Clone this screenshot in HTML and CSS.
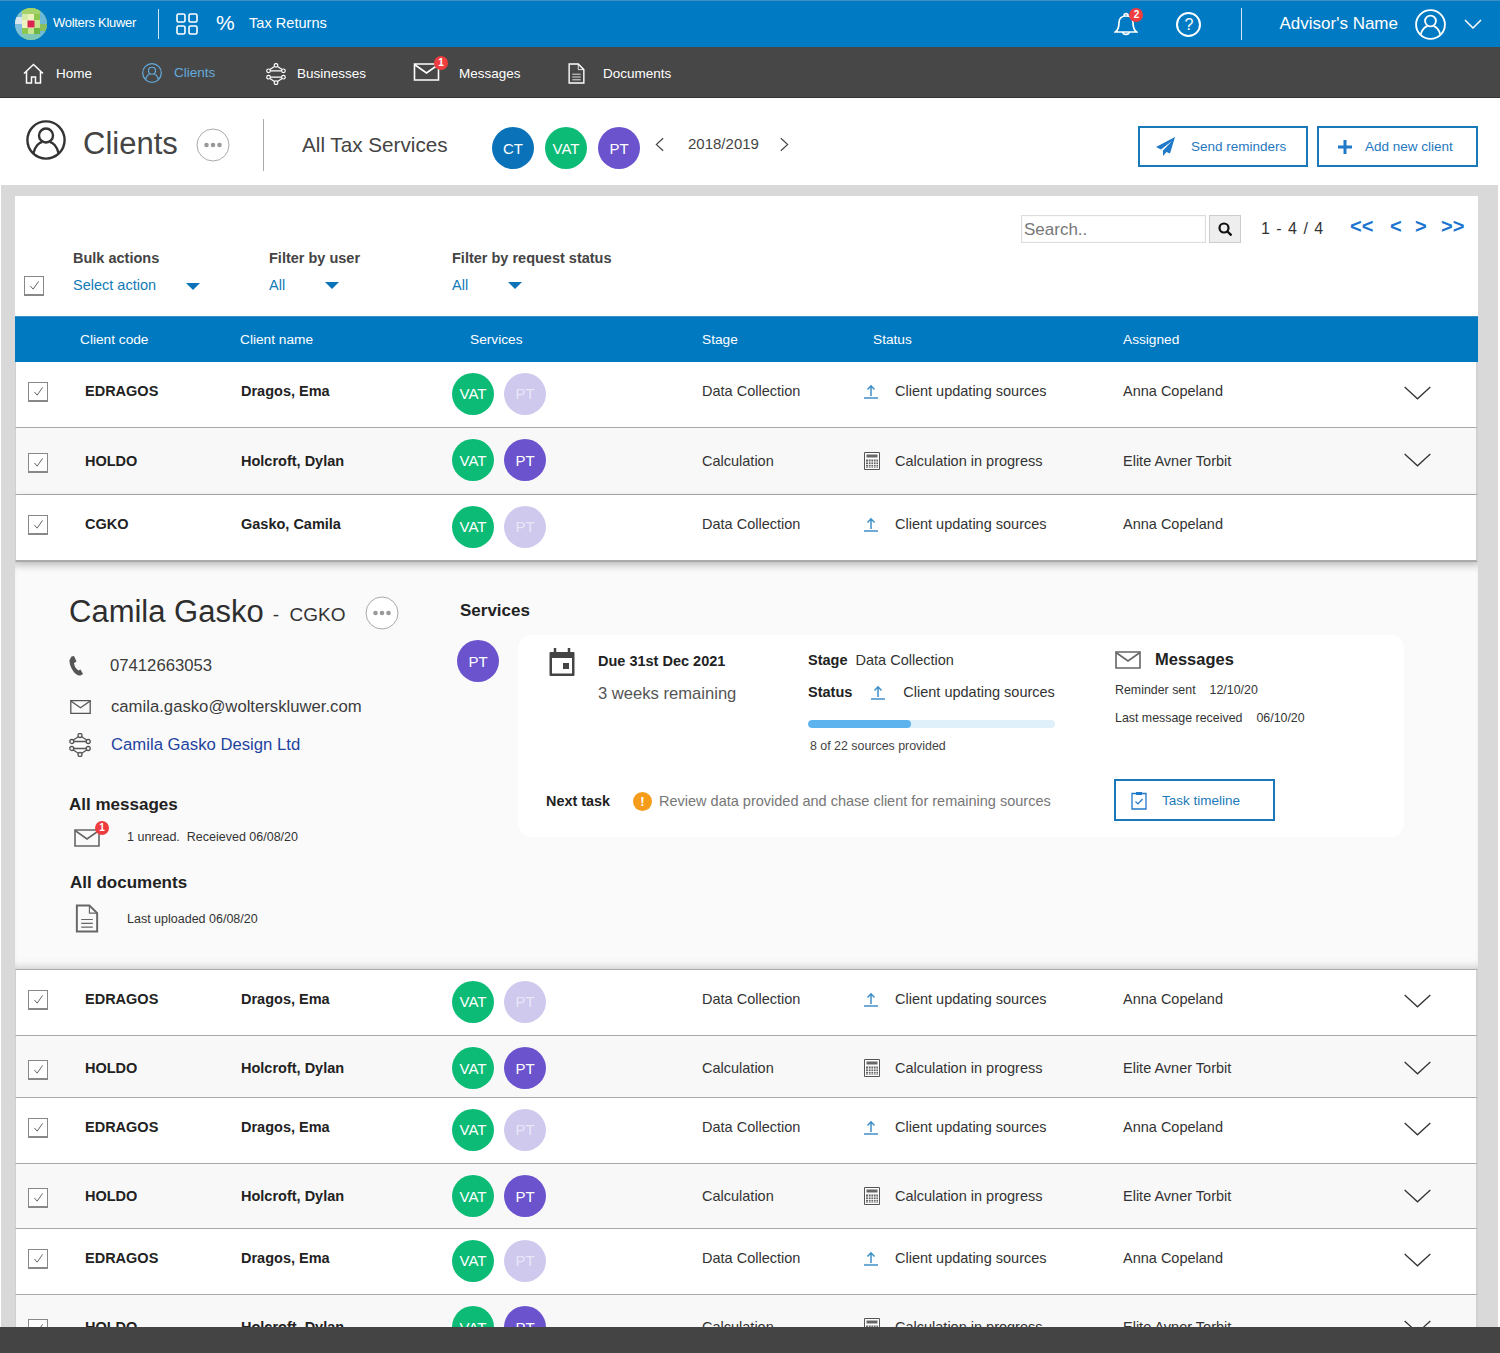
FILE: index.html
```html
<!DOCTYPE html>
<html lang="en">
<head>
<meta charset="utf-8">
<title>Clients</title>
<link rel="stylesheet" href="styles.css">
</head>
<body>
<svg class="sprite" xmlns="http://www.w3.org/2000/svg">
  <symbol id="i-user" viewBox="0 0 40 40"><circle cx="20" cy="20" r="18.600" fill="none" stroke="currentColor" stroke-width="2.400"/><circle cx="20" cy="15.500" r="7" fill="none" stroke="currentColor" stroke-width="2.400"/><path d="M7.500 33c1.500-7 6-10.500 8.500-11M32.500 33c-1.500-7-6-10.500-8.500-11" fill="none" stroke="currentColor" stroke-width="2.400"/></symbol>
  <symbol id="i-up" viewBox="0 0 16 16"><path d="M8 13V3M4.500 6.500 8 2.800l3.500 3.700" fill="none" stroke="#3f8fc7" stroke-width="1.500"/><path d="M1 15h14" stroke="#3f8fc7" stroke-width="1.500"/></symbol>
  <symbol id="i-calc" viewBox="0 0 16 18"><path d="M.5.500h15v17H.5z" fill="#fff" stroke="#555"/><path d="M2.500 2.500h11v3h-11z" fill="#666"/><path d="M2 7.500h12v8.500H2z" fill="#666"/><path d="M4.500 7.500V16M7 7.500V16M9.500 7.500V16M12 7.500V16M2 10h12M2 12.500h12M2 15h12" stroke="#fff" stroke-width=".8"/></symbol>
  <symbol id="i-chev" viewBox="0 0 28 14"><path d="M.7.700 14 13 27.300.700" fill="none" stroke="#333" stroke-width="1.300"/></symbol>
  <symbol id="i-check" viewBox="0 0 12 12"><path d="M1.500 6.500 4.500 10 10.500 1.500" fill="none" stroke="#555" stroke-width="1"/></symbol>
  <symbol id="i-mail" viewBox="0 0 26 18"><path d="M1 1h24v16H1z" fill="none" stroke="currentColor" stroke-width="1.600"/><path d="M1 1.500 13 10 25 1.500" fill="none" stroke="currentColor" stroke-width="1.600"/></symbol>
  <symbol id="i-doc" viewBox="0 0 24 30"><path d="M1.500 1.500h13l8 8v19h-21z" fill="none" stroke="currentColor" stroke-width="2"/><path d="M14.500 1.500v8h8M6 16h12M6 20h12M6 24h12" fill="none" stroke="currentColor" stroke-width="1.200"/></symbol>
  <symbol id="i-biz" viewBox="0 0 22 24"><g fill="none" stroke="currentColor" stroke-width="1.300"><circle cx="11" cy="2.500" r="2"/><circle cx="11" cy="21.500" r="2"/><circle cx="2.800" cy="8.500" r="2"/><circle cx="19.200" cy="8.500" r="2"/><circle cx="2.800" cy="15.500" r="2"/><circle cx="19.200" cy="15.500" r="2"/><path d="M9.300 3.800 4.300 7M12.700 3.800l5 3.200M4.800 8.500h12.400M4.800 15.500h12.400M9.300 20.200l-5-3.200M12.700 20.200l5-3.200"/></g></symbol>
  <symbol id="i-more" viewBox="0 0 34 34"><circle cx="17" cy="17" r="16" fill="#fff" stroke="#aaa"/><circle cx="10.500" cy="17" r="2.300" fill="#999"/><circle cx="17" cy="17" r="2.300" fill="#999"/><circle cx="23.500" cy="17" r="2.300" fill="#999"/></symbol>
</svg>

<div class="topbar">
  <div class="brand">
    <svg class="logo" viewBox="0 0 32 32"><defs><clipPath id="logo-clip"><circle cx="16" cy="16" r="16"/></clipPath></defs><g clip-path="url(#logo-clip)"><rect width="32" height="32" fill="#8cc850"/><rect x="0" y="0" width="7" height="32" fill="#7fbfdc"/><rect x="25" y="0" width="7" height="32" fill="#6fb9d8"/><rect x="7" y="0" width="18" height="6" fill="#a5d36a"/><rect x="7" y="26" width="18" height="6" fill="#7fc8b8"/><rect x="7" y="6" width="6" height="6" fill="#d5e9a8"/><rect x="13" y="6" width="6" height="6" fill="#eef2c0"/><rect x="19" y="6" width="6" height="6" fill="#8cc850"/><rect x="7" y="12" width="6" height="8" fill="#eef2c0"/><rect x="13" y="12" width="6" height="8" fill="#fff7d8"/><rect x="19" y="12" width="6" height="8" fill="#c9e490"/><rect x="7" y="20" width="6" height="6" fill="#8cc850"/><rect x="13" y="20" width="6" height="6" fill="#c9e490"/><rect x="19" y="20" width="6" height="6" fill="#6db544"/><rect x="0" y="9" width="7" height="7" fill="#d8e6ee"/><rect x="25" y="16" width="7" height="7" fill="#8bbf5e"/><rect x="12.500" y="12.500" width="7" height="7" fill="#d9264f"/></g></svg>
    <span class="brand-name">Wolters Kluwer</span>
  </div>
  <span class="bar-divider"></span>
  <svg class="grid-icon" viewBox="0 0 22 22"><g fill="none" stroke="#fff" stroke-width="1.600"><rect x="1" y="1" width="8" height="8" rx="1.500"/><rect x="13" y="1" width="8" height="8" rx="1.500"/><rect x="1" y="13" width="8" height="8" rx="1.500"/><rect x="13" y="13" width="8" height="8" rx="1.500"/></g></svg>
  <span class="percent">%</span>
  <span class="product">Tax Returns</span>
  <div class="topbar-right">
    <span class="bell">
      <svg viewBox="0 0 24 24" width="24" height="24"><path d="M1.500 20c2.500-2 3.500-5 3.500-9.500 0-4 3-6.500 7-6.500s7 2.500 7 6.500c0 4.500 1 7.500 3.500 9.500zM10 3.500c0-2.500 4-2.500 4 0M9 20.500c0 2.500 6 2.500 6 0" fill="none" stroke="#fff" stroke-width="1.700"/></svg>
      <b class="badge badge-bell">2</b>
    </span>
    <span class="help">?</span>
    <span class="bar-divider bar-divider-right"></span>
    <span class="advisor">Advisor's Name</span>
    <svg class="advisor-user"><use href="#i-user"/></svg>
    <svg class="advisor-chev" viewBox="0 0 18 10"><path d="M1 1l8 8 8-8" fill="none" stroke="#fff" stroke-width="1.500"/></svg>
  </div>
</div>

<nav class="nav">
  <a class="nav-item"><svg class="nav-icon" width="21" height="21" viewBox="0 0 21 21"><path d="M1 10.500 10.500 1.500 20 10.500M3.500 8.500V20h5v-6h4v6h5V8.500" fill="none" stroke="#fff" stroke-width="1.500"/></svg>Home</a>
  <a class="nav-item nav-active"><svg class="nav-icon nav-user" width="20" height="20"><use href="#i-user"/></svg>Clients</a>
  <a class="nav-item nav-narrow"><svg class="nav-icon" width="20" height="22"><use href="#i-biz"/></svg>Businesses</a>
  <a class="nav-item"><span class="nav-mail"><svg width="27" height="18"><use href="#i-mail"/></svg><b class="badge badge-nav">1</b></span>Messages</a>
  <a class="nav-item"><svg class="nav-icon nav-doc" width="17" height="21"><use href="#i-doc"/></svg>Documents</a>
</nav>

<header class="page-head">
  <svg class="head-user"><use href="#i-user"/></svg>
  <h1 class="head-title">Clients</h1>
  <svg class="more more-head"><use href="#i-more"/></svg>
  <span class="head-divider"></span>
  <span class="head-sub">All Tax Services</span>
  <div class="avatars head-avatars">
    <span class="avatar av-ct">CT</span>
    <span class="avatar av-vat">VAT</span>
    <span class="avatar av-pt">PT</span>
  </div>
  <svg class="year-arrow year-prev" viewBox="0 0 10 16"><path d="M9 1 1.500 8 9 15" fill="none" stroke="#444" stroke-width="1.300"/></svg>
  <span class="year">2018/2019</span>
  <svg class="year-arrow year-next" viewBox="0 0 10 16"><path d="M1 1l7.500 7L1 15" fill="none" stroke="#444" stroke-width="1.300"/></svg>
  <div class="head-actions">
    <a class="btn btn-send"><svg width="19" height="19" viewBox="0 0 19 19"><path d="M19 0 0 10l5 2.500L16 4 7 13.500V19l3.500-4 3.500 1.500z" fill="#1f78c8"/></svg>Send reminders</a>
    <a class="btn btn-add"><svg width="14" height="14" viewBox="0 0 14 14"><path d="M7 0v14M0 7h14" stroke="#1f78c8" stroke-width="3"/></svg>Add new client</a>
  </div>
</header>

<main class="content">
  <section class="panel">
    <div class="pager">
      <span class="search-field">Search..</span>
      <span class="search-btn"><svg width="14" height="14" viewBox="0 0 14 14"><circle cx="6" cy="6" r="4.500" fill="none" stroke="#111" stroke-width="2.200"/><path d="m9.500 9.500 4 4" stroke="#111" stroke-width="2.400"/></svg></span>
      <span class="page-count">1 - 4 / 4</span>
      <span class="page-links"><a>&lt;&lt;</a><a>&lt;</a><a>&gt;</a><a>&gt;&gt;</a></span>
    </div>
    <div class="filters">
      <span class="check check-all"><svg><use href="#i-check"/></svg></span>
      <div class="filter filter-bulk"><span class="filter-label">Bulk actions</span><span class="filter-value">Select action<i class="caret"></i></span></div>
      <div class="filter filter-user"><span class="filter-label">Filter by user</span><span class="filter-value">All<i class="caret"></i></span></div>
      <div class="filter filter-req"><span class="filter-label">Filter by request status</span><span class="filter-value">All<i class="caret"></i></span></div>
    </div>
    <div class="table-head">
      <span>Client code</span><span>Client name</span><span>Services</span><span>Stage</span><span>Status</span><span>Assigned</span>
    </div>

    <div class="row row-plain">
      <span class="check"><svg><use href="#i-check"/></svg></span>
      <span class="code">EDRAGOS</span><span class="name">Dragos, Ema</span>
      <div class="avatars"><span class="avatar av-vat">VAT</span><span class="avatar av-off">PT</span></div>
      <span class="cell">Data Collection</span>
      <span class="cell status"><svg class="st-icon"><use href="#i-up"/></svg>Client updating sources</span>
      <span class="cell">Anna Copeland</span>
      <svg class="chev"><use href="#i-chev"/></svg>
    </div>
    <div class="row row-alt row-tall">
      <span class="check"><svg><use href="#i-check"/></svg></span>
      <span class="code">HOLDO</span><span class="name">Holcroft, Dylan</span>
      <div class="avatars"><span class="avatar av-vat">VAT</span><span class="avatar av-pt">PT</span></div>
      <span class="cell">Calculation</span>
      <span class="cell status"><svg class="st-icon st-calc"><use href="#i-calc"/></svg>Calculation in progress</span>
      <span class="cell">Elite Avner Torbit</span>
      <svg class="chev"><use href="#i-chev"/></svg>
    </div>
    <div class="row row-plain row-open">
      <span class="check"><svg><use href="#i-check"/></svg></span>
      <span class="code">CGKO</span><span class="name">Gasko, Camila</span>
      <div class="avatars"><span class="avatar av-vat">VAT</span><span class="avatar av-off">PT</span></div>
      <span class="cell">Data Collection</span>
      <span class="cell status"><svg class="st-icon"><use href="#i-up"/></svg>Client updating sources</span>
      <span class="cell">Anna Copeland</span>
    </div>

    <div class="detail">
      <div class="detail-left">
        <div class="person">
          <h2 class="person-name">Camila Gasko</h2>
          <span class="person-code">-&nbsp; CGKO</span>
          <svg class="more more-person"><use href="#i-more"/></svg>
        </div>
        <div class="contact contact-phone">
          <svg class="contact-icon phone" width="14" height="20" viewBox="0 0 14 20"><path d="M2.500.500 5 0l2.500 5.500L5 7c0 2.500 2 6 4.500 7.500l2-1 2.500 4.500-2.500 1.500C6 20.500 0 10 .5 4z" fill="#555"/></svg>
          <span>07412663053</span>
        </div>
        <div class="contact contact-mail">
          <svg class="contact-icon" width="21" height="16"><use href="#i-mail"/></svg>
          <span>camila.gasko@wolterskluwer.com</span>
        </div>
        <div class="contact contact-biz">
          <svg class="contact-icon" width="22" height="24"><use href="#i-biz"/></svg>
          <a>Camila Gasko Design Ltd</a>
        </div>
        <h3 class="side-title side-messages">All messages</h3>
        <div class="side-line">
          <span class="side-mail"><svg width="26" height="18"><use href="#i-mail"/></svg><b class="badge badge-side">1</b></span>
          <span>1 unread.&nbsp; Receieved 06/08/20</span>
        </div>
        <h3 class="side-title side-docs">All documents</h3>
        <div class="side-line side-line-doc">
          <svg class="side-doc" width="24" height="29"><use href="#i-doc"/></svg>
          <span>Last uploaded 06/08/20</span>
        </div>
      </div>
      <div class="detail-right">
        <h3 class="services-title">Services</h3>
        <div class="service">
          <span class="avatar av-pt">PT</span>
          <div class="card">
            <div class="card-top">
              <svg class="cal" width="26" height="29" viewBox="0 0 26 29"><path d="M6 0v4M20 0v4" stroke="#444" stroke-width="2.500"/><path d="M1.500 4h23a1 1 0 0 1 1 1v22a1 1 0 0 1-1 1h-23a1 1 0 0 1-1-1V5a1 1 0 0 1 1-1z" fill="#444"/><path d="M3 10h20v15.500H3z" fill="#fff"/><path d="M14 15h6v6h-6z" fill="#444"/></svg>
              <div class="due">
                <strong>Due 31st Dec 2021</strong>
                <span>3 weeks remaining</span>
              </div>
              <div class="progress-col">
                <div class="kv"><strong>Stage</strong><span>Data Collection</span></div>
                <div class="kv kv-status"><strong>Status</strong><svg class="st-icon"><use href="#i-up"/></svg><span>Client updating sources</span></div>
                <div class="progress"><div class="progress-fill" style="width:41.500%"></div></div>
                <div class="progress-note">8 of 22 sources provided</div>
              </div>
              <div class="messages-col">
                <div class="msg-head"><svg width="26" height="18"><use href="#i-mail"/></svg><strong>Messages</strong></div>
                <div class="msg-line"><span>Reminder sent</span><span>12/10/20</span></div>
                <div class="msg-line"><span>Last message received</span><span>06/10/20</span></div>
              </div>
            </div>
            <div class="card-bottom">
              <div class="next-task">
                <strong class="next-label">Next task</strong>
                <span class="warn">!</span>
                <span class="next-text">Review data provided and chase client for remaining sources</span>
              </div>
              <a class="btn btn-task"><svg width="16" height="19" viewBox="0 0 16 19"><path d="M5 2.500H1v15.500h14V2.500h-4" fill="none" stroke="#1f78c8" stroke-width="1.300"/><path d="M5 1h6v3H5z" fill="#1f78c8"/><path d="m4.500 10.500 2.500 2.500 4.500-5" fill="none" stroke="#1f78c8" stroke-width="1.200"/></svg>Task timeline</a>
            </div>
          </div>
        </div>
      </div>
    </div>

    <div class="row row-plain row-first">
      <span class="check"><svg><use href="#i-check"/></svg></span>
      <span class="code">EDRAGOS</span><span class="name">Dragos, Ema</span>
      <div class="avatars"><span class="avatar av-vat">VAT</span><span class="avatar av-off">PT</span></div>
      <span class="cell">Data Collection</span>
      <span class="cell status"><svg class="st-icon"><use href="#i-up"/></svg>Client updating sources</span>
      <span class="cell">Anna Copeland</span>
      <svg class="chev"><use href="#i-chev"/></svg>
    </div>
    <div class="row row-alt row-short">
      <span class="check"><svg><use href="#i-check"/></svg></span>
      <span class="code">HOLDO</span><span class="name">Holcroft, Dylan</span>
      <div class="avatars"><span class="avatar av-vat">VAT</span><span class="avatar av-pt">PT</span></div>
      <span class="cell">Calculation</span>
      <span class="cell status"><svg class="st-icon st-calc"><use href="#i-calc"/></svg>Calculation in progress</span>
      <span class="cell">Elite Avner Torbit</span>
      <svg class="chev"><use href="#i-chev"/></svg>
    </div>
    <div class="row row-plain">
      <span class="check"><svg><use href="#i-check"/></svg></span>
      <span class="code">EDRAGOS</span><span class="name">Dragos, Ema</span>
      <div class="avatars"><span class="avatar av-vat">VAT</span><span class="avatar av-off">PT</span></div>
      <span class="cell">Data Collection</span>
      <span class="cell status"><svg class="st-icon"><use href="#i-up"/></svg>Client updating sources</span>
      <span class="cell">Anna Copeland</span>
      <svg class="chev"><use href="#i-chev"/></svg>
    </div>
    <div class="row row-alt">
      <span class="check"><svg><use href="#i-check"/></svg></span>
      <span class="code">HOLDO</span><span class="name">Holcroft, Dylan</span>
      <div class="avatars"><span class="avatar av-vat">VAT</span><span class="avatar av-pt">PT</span></div>
      <span class="cell">Calculation</span>
      <span class="cell status"><svg class="st-icon st-calc"><use href="#i-calc"/></svg>Calculation in progress</span>
      <span class="cell">Elite Avner Torbit</span>
      <svg class="chev"><use href="#i-chev"/></svg>
    </div>
    <div class="row row-plain">
      <span class="check"><svg><use href="#i-check"/></svg></span>
      <span class="code">EDRAGOS</span><span class="name">Dragos, Ema</span>
      <div class="avatars"><span class="avatar av-vat">VAT</span><span class="avatar av-off">PT</span></div>
      <span class="cell">Data Collection</span>
      <span class="cell status"><svg class="st-icon"><use href="#i-up"/></svg>Client updating sources</span>
      <span class="cell">Anna Copeland</span>
      <svg class="chev"><use href="#i-chev"/></svg>
    </div>
    <div class="row row-alt">
      <span class="check"><svg><use href="#i-check"/></svg></span>
      <span class="code">HOLDO</span><span class="name">Holcroft, Dylan</span>
      <div class="avatars"><span class="avatar av-vat">VAT</span><span class="avatar av-pt">PT</span></div>
      <span class="cell">Calculation</span>
      <span class="cell status"><svg class="st-icon st-calc"><use href="#i-calc"/></svg>Calculation in progress</span>
      <span class="cell">Elite Avner Torbit</span>
      <svg class="chev"><use href="#i-chev"/></svg>
    </div>
  </section>
</main>
<footer class="footer"></footer>
</body>
</html>
```
FILE: styles.css
```css
* { box-sizing: border-box; }
html, body { margin: 0; height: 1353px; overflow: hidden; }
body {
  display: flex; flex-direction: column;
  font-family: "Liberation Sans", Arial, sans-serif;
  font-size: 14px; color: #333; background: #fff;
  padding-right: 2px;
}
a { text-decoration: none; color: inherit; }
h1, h2, h3 { margin: 0; font-weight: normal; }
.sprite { display: none; }

/* top bar */
.topbar {
  flex: none; height: 47px; background: #007ac3; border-top: 1px solid #3d8fc4;
  display: flex; align-items: center; color: #fff; padding-left: 15px; margin-right: -2px;
}
.brand { display: flex; align-items: center; width: 143px; gap: 6px; }
.logo { width: 32px; height: 32px; flex: none; }
.brand-name { font-size: 13px; letter-spacing: -.3px; white-space: nowrap; margin-top: -3px; }
.bar-divider { width: 1px; height: 30px; background: #cfe6f5; flex: none; }
.grid-icon { width: 22px; height: 22px; margin-left: 17px; flex: none; }
.percent { font-size: 21px; margin-left: 18px; width: 33px; margin-top: -2px; }
.product { font-size: 14.600px; margin-top: -3px; }
.topbar-right { margin-left: auto; display: flex; align-items: center; padding-right: 18px; }
.bell { position: relative; width: 24px; height: 24px; margin-right: 37px; }
.badge {
  position: absolute; border-radius: 50%; background: #ee3c3f; color: #fff;
  width: 14px; height: 14px; font-size: 10px; line-height: 14px; text-align: center; font-weight: bold;
}
.badge-bell { top: -4px; right: -5px; }
.help {
  width: 25px; height: 25px; border: 2px solid #fff; border-radius: 50%; font-size: 16px;
  line-height: 21px; text-align: center; margin-right: 40px; margin-left: 1px;
}
.bar-divider-right { height: 32px; margin-right: 37px; }
.advisor { font-size: 17px; margin-right: 17px; white-space: nowrap; }
.advisor-user { width: 31px; height: 31px; color: #fff; margin-right: 18px; }
.advisor-chev { width: 18px; height: 10px; }

/* nav */
.nav {
  flex: none; height: 51px; background: #474747; border-bottom: 1px solid #333; color: #fff;
  display: grid; grid-template-columns: 119px 124px 147px 155px auto; align-items: center;
  padding-left: 23px; margin-right: -2px;
}
.nav-item { display: flex; align-items: center; gap: 12px; font-size: 13.500px; white-space: nowrap; margin-top: 3px; }
.nav-narrow { gap: 11px; }
.nav-icon { flex: none; color: #fff; }
.nav-active { color: #64abdc; margin-top: 1px; }
.nav-user { color: #64abdc; }
.nav-mail { position: relative; display: block; width: 34px; height: 18px; color: #fff; margin-top: -3px; }
.nav-doc { margin-right: 6px; }
.badge-nav { top: -7px; left: 21px; }

/* page header */
.page-head {
  flex: none; height: 87px; background: #fff; display: flex; align-items: center; padding-left: 26px;
  margin-right: -2px; padding-right: 22px; position: relative;
}
.head-user { width: 40px; height: 40px; color: #333; margin-top: -3px; flex: none; }
.head-title { font-size: 31px; color: #444; margin-left: 17px; width: 113px; margin-top: 5px; }
.more { width: 34px; height: 34px; flex: none; }
.more-head { margin-top: 7px; }
.head-divider { width: 1px; height: 52px; background: #aaa; margin-left: 33px; flex: none; margin-top: 7px; }
.head-sub { font-size: 20.700px; color: #444; margin-left: 38px; width: 190px; white-space: nowrap; margin-top: 6px; }
.avatars { display: flex; gap: 10px; align-items: center; }
.head-avatars { margin-top: 13px; gap: 11px; }
.avatar {
  width: 42px; height: 42px; border-radius: 50%; color: #fff; flex: none;
  display: flex; align-items: center; justify-content: center; font-size: 15px;
}
.av-ct { background: #0a72b8; }
.av-vat { background: #0cbb75; }
.av-pt { background: #6a53cc; }
.av-off { background: #cfc9ee; color: #e9e6f7; }
.year-arrow { width: 9px; height: 15px; flex: none; margin-top: 6px; }
.year-prev { margin-left: 15px; }
.year { font-size: 15px; margin-left: 24px; width: 92px; margin-top: 3px; color: #444; }
.head-actions { margin-left: auto; display: flex; gap: 9px; margin-top: 10px; }
.btn {
  display: flex; align-items: center; border: 2px solid #1a78b8; color: #1f78c0;
  font-size: 13.500px; white-space: nowrap; background: #fff;
}
.btn-send { width: 170px; height: 41px; padding-left: 16px; gap: 16px; }
.btn-add { width: 161px; height: 41px; padding-left: 19px; gap: 13px; }

/* content */
.content { flex: 1; min-height: 0; overflow: hidden; background: #d9d9d9; padding: 11px 20px 0 14px; border-left: 1px solid #fff; }
.panel { background: #fff; height: 100%; overflow: hidden; }

.pager { display: flex; align-items: center; padding: 19px 0 0 1006px; }
.search-field {
  width: 185px; height: 28px; border: 1px solid #ddd; color: #777; font-size: 17px; line-height: 28px; padding-left: 2px;
  box-shadow: inset 0 0 1px #ccc;
}
.search-btn {
  width: 32px; height: 28px; margin-left: 3px; background: #eee; border: 1px solid #ccc;
  display: flex; align-items: center; justify-content: center;
}
.page-count { font-size: 16px; margin-left: 20px; width: 89px; letter-spacing: 1px; color: #333; white-space: nowrap; }
.page-links { display: flex; font-size: 20px; font-weight: bold; color: #1a73d0; margin-top: -6px; }
.page-links a:nth-child(1) { width: 40px; }
.page-links a:nth-child(2) { width: 25px; }
.page-links a:nth-child(3) { width: 26px; }

.filters { display: grid; grid-template-columns: 49px 196px 183px auto; height: 73px; padding-left: 9px; padding-top: 5px; }
.check {
  width: 20px; height: 20px; border: 1px solid #888; border-bottom-width: 2px; background: #fff;
  display: flex; align-items: center; justify-content: center; flex: none;
}
.check svg { width: 11px; height: 11px; }
.check-all { align-self: end; margin-bottom: 20px; }
.filter { display: flex; flex-direction: column; gap: 11px; }
.filter-label { font-weight: bold; color: #444; font-size: 14.500px; line-height: 16px; margin-top: 2px; }
.filter-value { color: #127ab8; font-size: 14.500px; line-height: 16px; display: flex; align-items: center; }
.caret { width: 0; height: 0; border: 7.500px solid transparent; border-top: 7px solid #0a72b8; border-bottom: 0; }
.filter-bulk .caret { margin-left: 30px; margin-top: 3px; }
.filter-user .caret { margin-left: 40px; }
.filter-req .caret { margin-left: 40px; }

.table-head {
  height: 46px; background: #0079c1; color: #fff; font-size: 13.700px; border-top: 1px solid #3d8fc4;
  display: grid; grid-template-columns: 160px 230px 232px 171px 250px auto; align-items: center; padding-left: 65px;
}

.row {
  display: grid; grid-template-columns: 57px 156px 211px 250px 161px 260px 281px 27px; align-items: center;
  height: 66px; padding-left: 12px; border-bottom: 1px solid #aaa; border-left: 1px solid #d0d0d0; border-right: 2px solid #d2d2d2;
  background: #fff; font-size: 14px; color: #333;
}
.row-alt { background: #f8f8f8; height: 65px; }
.row-tall { height: 67px; }
.row-short { height: 62px; }
.row-first { border-top: 1px solid #aaa; height: 67px; }
.row-open { border-bottom: 2px solid #aaa; box-shadow: 0 3px 8px rgba(0,0,0,.18); position: relative; height: 67px; }
.code, .name { font-weight: bold; color: #222; font-size: 14.500px; white-space: nowrap; }
.cell { white-space: nowrap; font-size: 14.500px; color: #333; }
.status { display: flex; align-items: center; }
.st-icon { width: 16px; height: 16px; flex: none; margin-right: 16px; }
.st-calc { height: 18px; margin-left: 1px; margin-right: 15px; }
.chev { width: 27px; height: 14px; }
.row-plain .code, .row-plain .name, .row-plain .cell { margin-bottom: 7px; }
.row-plain .check { margin-bottom: 5px; }
.row-plain .avatars { margin-bottom: 2px; }
.row-plain .chev { margin-bottom: 3px; }
.row-alt .check { margin-top: 3px; }
.row-tall .avatars { margin-bottom: 2px; }
.row-tall .chev { margin-bottom: 2px; }
.row-short .code, .row-short .name, .row-short .cell, .row-short .avatars, .row-short .chev { margin-top: 3px; }
.row-short .check { margin-top: 7px; }

/* detail */
.detail {
  height: 407px; background: #fafafa; display: grid; grid-template-columns: 388px auto;
  box-shadow: inset 0 -8px 8px -6px #ccc, inset 0 8px 8px -6px #ddd; padding: 31px 0 0 54px;
}
.person { display: flex; align-items: center; }
.person-name { font-size: 31px; color: #2e2e2e; white-space: nowrap; }
.person-code { font-size: 19px; margin-left: 9px; color: #333; white-space: nowrap; margin-top: 7px; width: 92px; }
.more-person { width: 34px; height: 34px; margin-top: 3px; }
.contact { display: flex; align-items: center; font-size: 16.700px; color: #3c3c3c; }
.contact-icon { color: #555; flex: none; }
.contact-phone { margin-top: 24px; height: 24px; gap: 27px; }
.contact-mail { margin-top: 17px; height: 24px; gap: 20px; padding-left: 1px; }
.contact-biz { margin-top: 14px; height: 24px; gap: 20px; }
.contact-biz a { color: #1e429e; }
.side-title { font-size: 17px; font-weight: bold; color: #222; }
.side-messages { margin-top: 38px; }
.side-line { display: flex; align-items: center; font-size: 12.500px; color: #333; margin-top: 12px; }
.side-mail { position: relative; display: block; flex: none; width: 53px; height: 18px; color: #666; margin-left: 5px; margin-top: 2px; }
.badge-side { top: -8px; left: 21px; }
.side-docs { margin-top: 26px; margin-left: 1px; }
.side-doc { color: #666; margin-left: 6px; margin-right: 28px; }
.side-line-doc { margin-top: 11px; }

.detail-right { padding-left: 3px; }
.services-title { font-size: 17px; font-weight: bold; color: #222; margin-top: 8px; }
.service { display: flex; margin-top: 14px; margin-left: -3px; gap: 19px; align-items: flex-start; }
.service > .avatar { margin-top: 5px; }
.card { width: 886px; height: 202px; background: #fff; border-radius: 14px; display: flex; flex-direction: column; justify-content: space-between; padding: 13px 0 16px 0; }
.card-top { display: grid; grid-template-columns: 80px 210px 307px auto; }
.cal { margin-left: 31px; }
.due strong { display: block; font-size: 14.500px; color: #222; margin-top: 5px; }
.due span { display: block; font-size: 16.600px; color: #555; margin-top: 15px; }
.kv { display: flex; align-items: center; font-size: 14.500px; color: #333; white-space: nowrap; height: 24px; }
.kv strong { margin-right: 8px; color: #222; }
.kv-status { margin-top: 8px; }
.kv-status strong { margin-right: 18px; }
.kv-status .st-icon { margin-right: 17px; }
.progress { width: 247px; height: 8px; background: #dff0fb; border-radius: 4px; margin-top: 16px; overflow: hidden; }
.progress-fill { height: 100%; background: #5cb3ee; border-radius: 4px; }
.progress-note { font-size: 12.400px; margin: 11px 0 0 2px; color: #444; }
.msg-head { display: flex; align-items: center; gap: 14px; color: #666; margin-top: 2px; }
.msg-head strong { font-size: 16.500px; color: #222; }
.msg-line { display: flex; gap: 14px; font-size: 12.400px; color: #333; margin-top: 14px; white-space: nowrap; }
.msg-head + .msg-line { margin-top: 14px; }
.card-bottom { display: flex; align-items: center; padding-left: 28px; }
.next-task { display: flex; align-items: center; margin-top: 2px; }
.next-label { font-size: 14.400px; color: #222; width: 87px; }
.warn { width: 19px; height: 19px; border-radius: 50%; background: #f59c1a; color: #fff; font-weight: bold; font-size: 13px; text-align: center; line-height: 19px; flex: none; }
.next-text { font-size: 14.500px; color: #777; margin-left: 7px; width: 455px; white-space: nowrap; }
.btn-task { width: 161px; height: 42px; padding-left: 15px; gap: 15px; color: #1a7ab8; font-size: 13.500px; }

.footer { flex: none; height: 26px; background: #444; margin-right: -2px; position: relative; }
```
